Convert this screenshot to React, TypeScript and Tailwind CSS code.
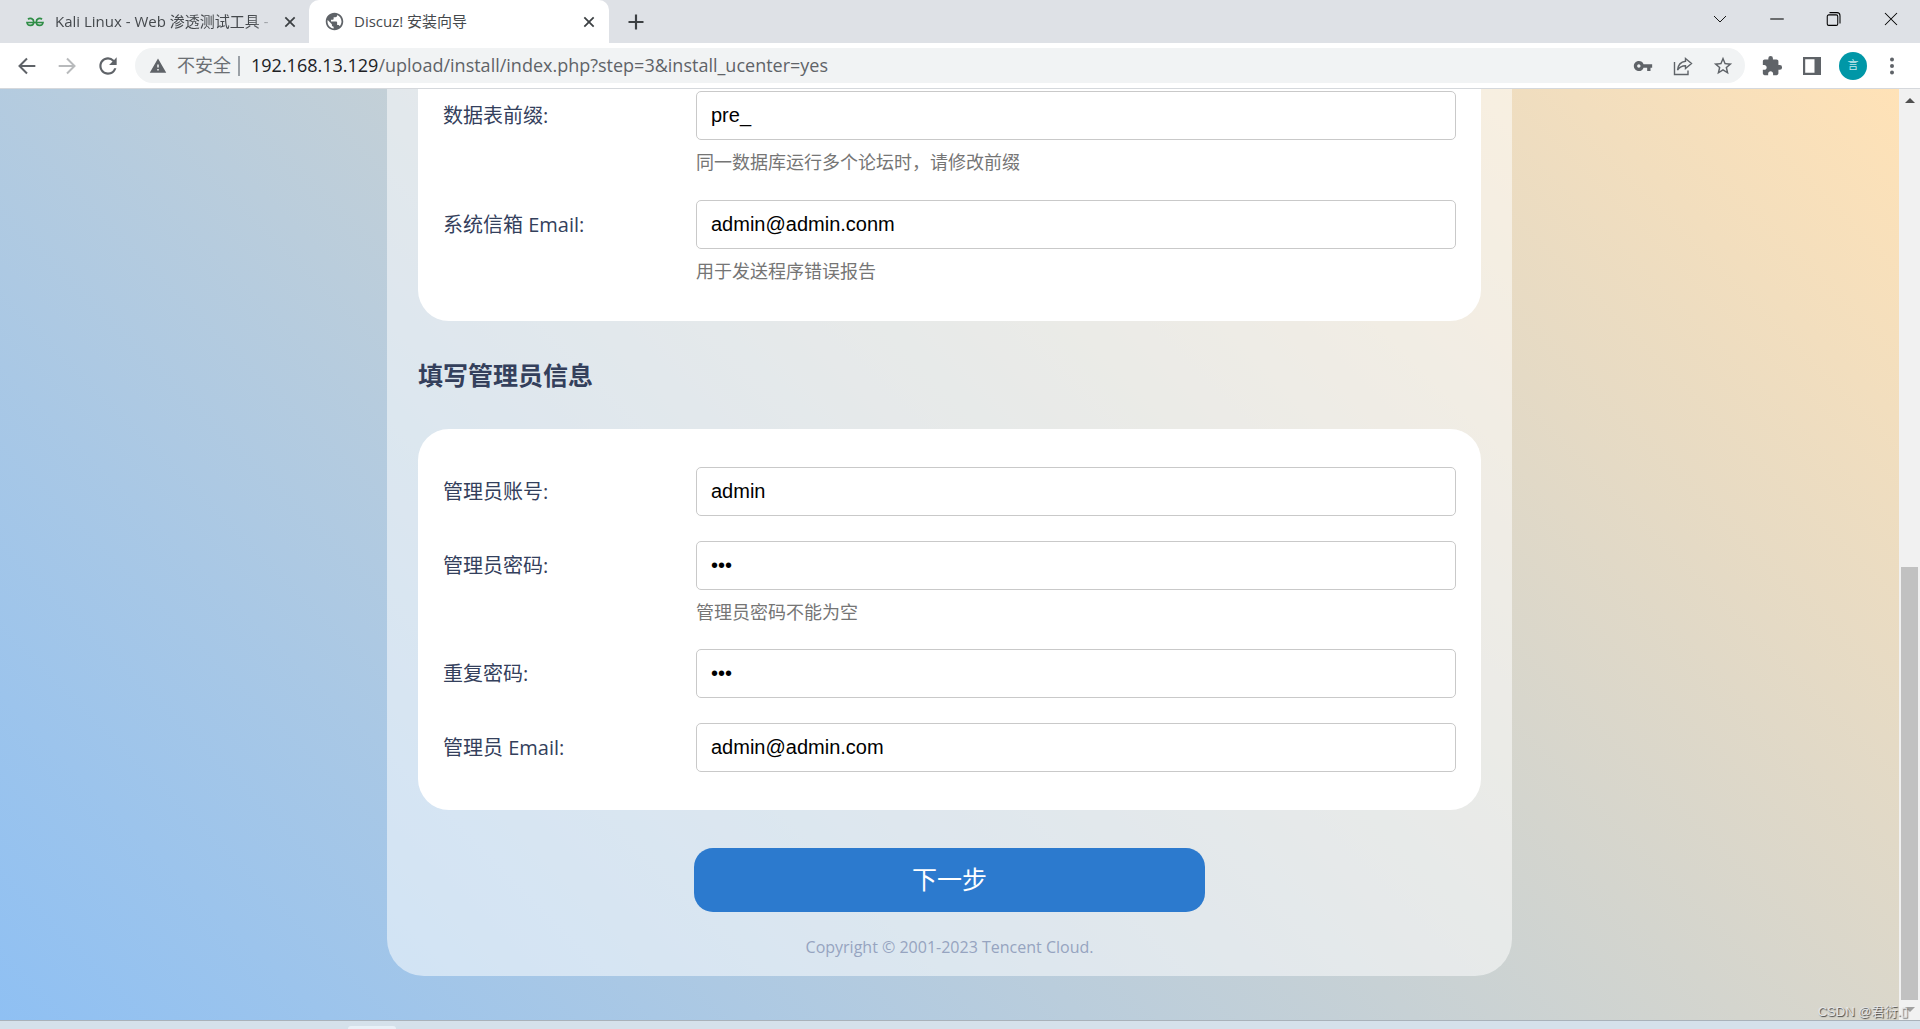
import type { ReactNode } from "react";
import { MdExtension, MdPublic, MdRefresh, MdStarBorder, MdVpnKey, MdWarning } from "react-icons/md";

const LATIN_CJK = "font-['Open_Sans','Noto_Sans_CJK_SC',sans-serif]";

function Glyph({ d, className, width = 2 }: { d: string; className: string; width?: number }) {
  return (
    <svg viewBox="0 0 24 24" aria-hidden="true" fill="none" stroke="currentColor" strokeWidth={width} className={className}>
      <path d={d} />
    </svg>
  );
}

function IconButton({ label, children, className = "" }: { label: string; children: ReactNode; className?: string }) {
  return (
    <button type="button" aria-label={label} className={"flex shrink-0 items-center justify-center " + className}>
      {children}
    </button>
  );
}

function TabStrip() {
  return (
    <div className="flex h-[43px] items-stretch bg-[#dee1e6] text-[15px] text-[#45494d]">
      <div className="flex w-[309px] items-center rounded-br-[10px] pl-[26px]">
        <svg viewBox="0 0 36 20" className="h-[12px] w-[18px] shrink-0" fill="none" stroke="#2f8d46" strokeWidth="3.4" aria-hidden="true">
          <path d="M4 4.500C8 1 15.500 3 15.500 10C15.500 19 3 19 2 11H34C33 19 20.500 19 20.500 10C20.500 3 28 1 32 4.500" />
        </svg>
        <span className="ml-[11px] w-[220px] whitespace-nowrap [mask-image:linear-gradient(to_right,black_90%,transparent)]">
          Kali Linux - Web 渗透测试工具 -
        </span>
        <IconButton label="关闭标签页" className="ml-[5px] size-[20px] text-[#3c4043]">
          <Glyph d="M5 5L19 19M19 5L5 19" className="size-[16px]" width={2.6} />
        </IconButton>
      </div>
      <div className="flex w-[300px] items-center rounded-t-[10px] bg-white pl-[15px]">
        <MdPublic className="size-[21px] shrink-0 text-[#5f6368]" />
        <span className="ml-[9px] flex-1 whitespace-nowrap">Discuz! 安装向导</span>
        <IconButton label="关闭标签页" className="mr-[10px] size-[20px] text-[#3c4043]">
          <Glyph d="M5 5L19 19M19 5L5 19" className="size-[16px]" width={2.6} />
        </IconButton>
      </div>
      <IconButton label="新标签页" className="w-[54px] text-[#3c4043]">
        <Glyph d="M12 3V21M3 12H21" className="size-[20px]" width={2.6} />
      </IconButton>
      <div className="ml-auto flex h-[37px] text-black">
        <IconButton label="搜索标签页" className="w-[57px]">
          <Glyph d="M4 8L12 16L20 8" className="size-[18px]" width={1.2} />
        </IconButton>
        <IconButton label="最小化" className="w-[57px]">
          <Glyph d="M3 12H21" className="size-[18px]" width={1.4} />
        </IconButton>
        <IconButton label="还原" className="w-[57px]">
          <Glyph
            d="M5 6.500H15A2 2 0 0 1 17 8.500V18.500A2 2 0 0 1 15 20.500H5A2 2 0 0 1 3 18.500V8.500A2 2 0 0 1 5 6.500ZM6 3.500H16A4 4 0 0 1 20 7.500V18"
            className="size-[18px]"
            width={1.4}
          />
        </IconButton>
        <IconButton label="关闭" className="w-[58px]">
          <Glyph d="M4 4L20 20M20 4L4 20" className="size-[18px]" width={1.4} />
        </IconButton>
      </div>
    </div>
  );
}

function Toolbar() {
  return (
    <div className="flex h-[46px] items-center border-b border-[#d5d8dc] bg-white pl-[17px] text-[#5f6368]">
      <IconButton label="后退" className="size-[20px]">
        <Glyph d="M22 12H3M12 3L3 12L12 21" className="size-[20px]" width={2.4} />
      </IconButton>
      <IconButton label="前进" className="ml-[20px] size-[20px] text-[#b8babc]">
        <Glyph d="M2 12H21M12 3L21 12L12 21" className="size-[20px]" width={2.4} />
      </IconButton>
      <IconButton label="重新加载" className="ml-[18px] size-[26px]">
        <MdRefresh className="size-[26px]" />
      </IconButton>
      <div className="ml-[14px] flex h-[35px] flex-1 items-center rounded-full bg-[#f1f3f4] pl-[14px] text-[18px]">
        <MdWarning className="size-[18px] shrink-0" />
        <span className="ml-[10px] shrink-0 text-[#6b6f73]">不安全</span>
        <span className="mx-[7px] h-[20px] w-[2px] bg-[#9aa0a6]" />
        <div className="min-w-0 flex-1 whitespace-nowrap pl-[4px]">
          <span className="text-[#202124]">192.168.13.129</span>/upload/install/index.php?step=3&amp;install_ucenter=yes
        </div>
        <IconButton label="管理密码" className="w-[40px]"><MdVpnKey className="size-[20px]" /></IconButton>
        <IconButton label="分享" className="w-[40px]">
          <svg viewBox="0 0 20 20" className="size-[20px]" fill="none" stroke="currentColor" strokeWidth="1.4" aria-hidden="true">
            <path d="M1.500 6V18.500H15V14.500M12.500 2.500L18.500 7.500L12.500 12.500V9.800C9 9.800 6.500 11 4.500 14C5 9.500 7.500 6 12.500 5.300Z" />
          </svg>
        </IconButton>
        <IconButton label="收藏" className="mr-[2px] w-[40px]"><MdStarBorder className="size-[22px]" /></IconButton>
      </div>
      <IconButton label="扩展程序" className="ml-[16px] size-[22px]"><MdExtension className="size-[22px]" /></IconButton>
      <IconButton label="侧边栏" className="ml-[19px] size-[20px]">
        <svg viewBox="0 0 20 20" className="size-[20px]" aria-hidden="true">
          <path fill="currentColor" fillRule="evenodd" d="M1 1H19V19H1ZM3.200 3.200V16.800H12.500V3.200Z" />
        </svg>
      </IconButton>
      <button type="button" className="ml-[17px] flex size-[28px] items-center justify-center rounded-full bg-[#0097a7] text-[11px] text-[#c5e8ec]">
        言
      </button>
      <IconButton label="更多" className="ml-[15px] mr-[18px] size-[20px]">
        <svg viewBox="0 0 20 20" className="size-[20px]" fill="currentColor" aria-hidden="true">
          <circle cx="10" cy="3.500" r="2" /><circle cx="10" cy="10" r="2" /><circle cx="10" cy="16.500" r="2" />
        </svg>
      </IconButton>
    </div>
  );
}

type FieldProps = { id: string; label: string; value: string; type?: string; hint?: string };

function Field({ id, label, value, type = "text", hint }: FieldProps) {
  return (
    <div className="flex">
      <label htmlFor={id} className="flex h-[50px] w-[253px] shrink-0 items-center text-[20px] text-[#34405c]">
        {label}
      </label>
      <div className="min-w-0 flex-1">
        <input
          id={id}
          type={type}
          defaultValue={value}
          className="block h-[49px] w-full rounded-[5px] border border-[#c9c9c9] bg-white px-[14px] font-['Liberation_Sans',sans-serif] text-[20px] text-black outline-none"
        />
        {hint && <p className="h-[35px] pt-[9px] text-[18px] leading-[26px] text-[#757575]">{hint}</p>}
      </div>
    </div>
  );
}

function InstallForm() {
  return (
    <form className="mx-auto flex w-full max-w-[1125px] flex-col rounded-b-[37px] bg-white/52 px-[31px]">
      <section className="flex flex-col gap-[25px] rounded-b-[31px] bg-white px-[25px] pt-[2px] pb-[37px]">
        <Field id="prefix" label="数据表前缀:" value="pre_" hint="同一数据库运行多个论坛时，请修改前缀" />
        <Field id="sysmail" label="系统信箱 Email:" value="admin@admin.conm" hint="用于发送程序错误报告" />
      </section>
      <h2 className="my-[36px] text-[25px] leading-[36px] font-bold text-[#34405c]">填写管理员信息</h2>
      <section className="flex flex-col gap-[24px] rounded-[31px] bg-white px-[25px] pt-[38px] pb-[37px]">
        <Field id="user" label="管理员账号:" value="admin" />
        <Field id="pass" label="管理员密码:" value="abc" type="password" hint="管理员密码不能为空" />
        <Field id="pass2" label="重复密码:" value="abc" type="password" />
        <Field id="mail" label="管理员 Email:" value="admin@admin.com" />
      </section>
      <button type="button" className="mx-auto mt-[38px] h-[64px] w-[511px] rounded-[19px] bg-[#2c7ace] text-[25px] text-white">
        下一步
      </button>
      <footer className="pt-[24px] pb-[18px] text-center text-[16px] leading-[22px] text-[#96a4c0]">
        Copyright © 2001-2023 Tencent Cloud.
      </footer>
    </form>
  );
}

function Scrollbar() {
  return (
    <div className="flex w-[21px] shrink-0 flex-col items-center bg-[#f1f1f1]" aria-hidden="true">
      <svg viewBox="0 0 10 5" className="mt-[9px] h-[5px] w-[10px] shrink-0"><path fill="#505050" d="M0 5L5 0L10 5Z" /></svg>
      <div className="w-full grow-[464]" />
      <div className="w-[17px] grow-[433] bg-[#c1c1c1]" />
      <svg viewBox="0 0 10 5" className="mt-[7px] mb-[8px] h-[5px] w-[10px] shrink-0"><path fill="#a0a0a0" d="M0 0H10L5 5Z" /></svg>
    </div>
  );
}

export default function App() {
  return (
    <div className={"relative flex h-screen flex-col overflow-hidden " + LATIN_CJK}>
      <TabStrip />
      <Toolbar />
      <div className="flex min-h-0 flex-1 border-b border-[#a9b2ba]">
        <main className="min-w-0 flex-1 overflow-hidden bg-[linear-gradient(45deg,#8fc0f3,#ffe2b7)]">
          <InstallForm />
        </main>
        <Scrollbar />
      </div>
      <div className="flex h-[8px] shrink-0 items-end bg-[#d5e1eb] pl-[348px]">
        <div className="h-[3px] w-[48px] rounded-t-[3px] bg-[#e9f1f8]" />
      </div>
      <div className="absolute right-[12px] bottom-[9px] font-['Liberation_Sans','Noto_Sans_CJK_SC',sans-serif] text-[13px] leading-[16px] whitespace-nowrap text-[#e6e6e6] [text-shadow:1px_1px_1px_#444]">
        CSDN @君衍.▯
      </div>
    </div>
  );
}
